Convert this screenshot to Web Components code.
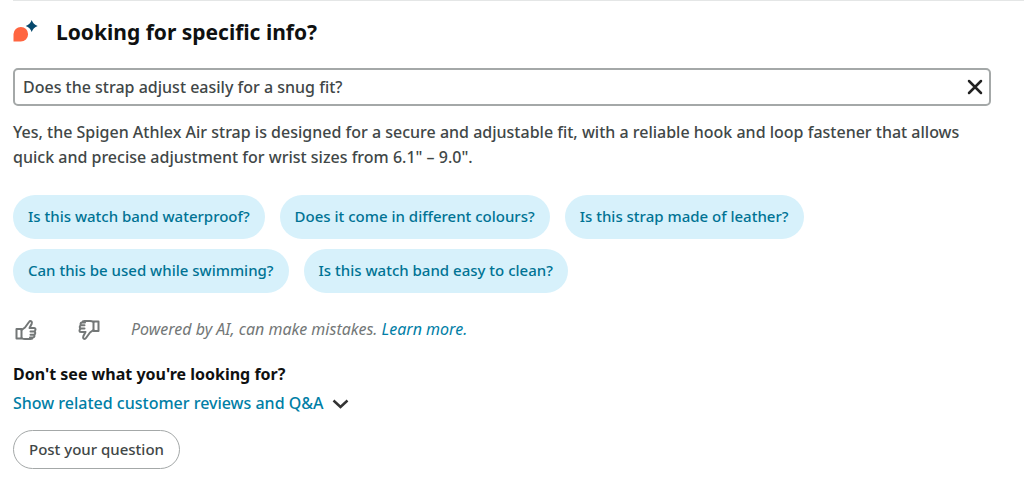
<!DOCTYPE html>
<html lang="en">
<head>
<meta charset="utf-8">
<meta name="viewport" content="width=device-width, initial-scale=1">
<title>Looking for specific info?</title>
<style>
    :root {
        --text: #414747;
        --heading: #0f1111;
        --link: #007ea6;
        --chip: #d7f1fb;
        --chip-text: #007394;
        --border: #a4a8a8;
        --muted: #737777;
    }
    body {
        margin: 0;
        background: #fff;
        color: var(--text);
        font: 500 16px/25px "Noto Sans", "Open Sans", sans-serif;
    }
</style>
</head>
<body>
<info-panel>
    <info-heading slot="heading">Looking for specific info?</info-heading>
    <question-box slot="question" value="Does the strap adjust easily for a snug fit?"></question-box>
    <span slot="answer">Yes, the Spigen Athlex Air strap is designed for a secure and adjustable fit, with a reliable hook and loop fastener that allows quick and precise adjustment for wrist sizes from 6.1" – 9.0".</span>
    <question-chip slot="chips">Is this watch band waterproof?</question-chip>
    <question-chip slot="chips">Does it come in different colours?</question-chip>
    <question-chip slot="chips">Is this strap made of leather?</question-chip>
    <question-chip slot="chips">Can this be used while swimming?</question-chip>
    <question-chip slot="chips">Is this watch band easy to clean?</question-chip>
    <answer-feedback slot="feedback">Powered by AI, can make mistakes.</answer-feedback>
    <more-help slot="more">Don't see what you're looking for?</more-help>
</info-panel>

<script>
class BaseElement extends HTMLElement {
    constructor() {
        super()
        this.attachShadow({ mode: 'open' })
        const template = document.createElement('template')
        template.innerHTML = this.markup
        this.shadowRoot.appendChild(template.content.cloneNode(true))
    }
}

class InfoPanel extends BaseElement {
    get markup() {
        return `
            <style>
            :host {
                display: block;
                margin-left: 13px;
            }
            section {
                border-top: 1px solid #e4e6e6;
                padding: 15px 33px 9px 0;
            }
            p {
                margin: 14px 0 25px;
            }
            .chips {
                display: flex;
                flex-wrap: wrap;
                gap: 10px 15px;
            }
            </style>
            <section>
                <slot name="heading"></slot>
                <slot name="question"></slot>
                <p><slot name="answer"></slot></p>
                <div class="chips"><slot name="chips"></slot></div>
                <slot name="feedback"></slot>
                <slot name="more"></slot>
            </section>
        `
    }
}

class InfoHeading extends BaseElement {
    get markup() {
        return `
            <style>
            :host {
                display: flex;
                gap: 18px;
                margin-bottom: 20px;
                color: var(--heading);
            }
            svg {
                flex: none;
            }
            h2 {
                margin: 0;
                font-size: 21px;
                line-height: 32px;
            }
            </style>
            <svg width="25" height="32" viewBox="0 0 25 32" aria-hidden="true">
                <path fill="#ff6540" d="M0.500 25.500V18A7.300 7.300 0 1 1 7.800 25.500Z"/>
                <path fill="#06496d" d="M18.700 4Q20.200 8.500 24.700 10Q20.200 11.500 18.700 16Q17.200 11.500 12.700 10Q17.200 8.500 18.700 4Z"/>
            </svg>
            <h2><slot></slot></h2>
        `
    }
}

class QuestionBox extends BaseElement {
    get markup() {
        return `
            <style>
            :host {
                display: block;
            }
            .box {
                display: flex;
                align-items: center;
                border: 2px solid var(--border);
                border-radius: 5px;
            }
            input {
                flex: 1;
                min-width: 0;
                height: 34px;
                box-sizing: border-box;
                padding: 0 8px;
                border: 0;
                outline: 0;
                background: none;
                color: inherit;
                font: inherit;
            }
            button {
                display: flex;
                padding: 6px;
                border: 0;
                background: none;
                cursor: pointer;
            }
            </style>
            <div class="box">
                <input type="text" aria-label="Your question">
                <button type="button" aria-label="Clear">
                    <svg width="16" height="16" viewBox="0 0 16 16" fill="none" stroke="#222" stroke-width="2.500" stroke-linecap="round">
                        <path d="M2 2L14 14M14 2L2 14"/>
                    </svg>
                </button>
            </div>
        `
    }

    connectedCallback() {
        const input = this.shadowRoot.querySelector("input")
        input.value = this.getAttribute("value") || ""
        this.shadowRoot.querySelector("button").onclick = () => {
            input.value = ""
            input.focus()
        }
    }
}

class QuestionChip extends BaseElement {
    get markup() {
        return `
            <style>
            :host {
                display: block;
            }
            button {
                display: block;
                height: 44px;
                padding: 0 15px 2px;
                border: 0;
                border-radius: 22px;
                background: var(--chip);
                color: var(--chip-text);
                font: inherit;
                font-size: 15px;
                cursor: pointer;
            }
            </style>
            <button type="button"><slot></slot></button>
        `
    }
}

class AnswerFeedback extends BaseElement {
    get markup() {
        const thumb = `
            <path d="M1.500 10H6.500V19.500H1.500Z"/>
            <path d="M6.500 11L10 8.500L14 3Q15 1.500 16.300 2.300Q17.300 3.200 16.700 4.700L14.500 9H19Q20.500 9 20.500 10.500T19 12.500H15.500M19 12.500Q20.300 12.700 20.300 14T18.800 15.700H15.500M18.800 15.700Q19.700 16 19.500 17.200T18 18.500H15M18 18.500Q17.500 20 15.500 20H10Q8 20 6.500 19"/>
        `
        return `
            <style>
            :host {
                display: flex;
                align-items: center;
                margin-top: 24px;
                padding-left: 2px;
                color: var(--muted);
                font-weight: 400;
            }
            button {
                display: flex;
                margin-right: 41px;
                padding: 0;
                border: 0;
                background: none;
                color: inherit;
                cursor: pointer;
            }
            button + button {
                margin-right: 31px;
            }
            svg {
                fill: none;
                stroke: currentColor;
                stroke-width: 2;
                stroke-linejoin: round;
                stroke-linecap: round;
            }
            a {
                color: var(--link);
                text-decoration: none;
            }
            </style>
            <button type="button" aria-label="Helpful">
                <svg width="22" height="22" viewBox="0 0 22 22">${thumb}</svg>
            </button>
            <button type="button" aria-label="Not helpful">
                <svg width="22" height="22" viewBox="0 0 22 22"><g transform="rotate(180 11 11)">${thumb}</g></svg>
            </button>
            <em><slot></slot> <a href="#">Learn more.</a></em>
        `
    }
}

class MoreHelp extends BaseElement {
    get markup() {
        return `
            <style>
            :host {
                display: block;
                margin-top: 20px;
            }
            h3 {
                margin: 0 0 4px;
                color: var(--heading);
                font-size: 16px;
                line-height: 25px;
            }
            a {
                display: inline-flex;
                align-items: center;
                gap: 8px;
                color: var(--link);
                text-decoration: none;
            }
            button {
                display: block;
                height: 39px;
                margin-top: 14px;
                padding: 0 15px;
                border: 1px solid var(--border);
                border-radius: 20px;
                background: #fff;
                color: inherit;
                font: inherit;
                font-size: 15px;
                cursor: pointer;
            }
            </style>
            <h3><slot></slot></h3>
            <a href="#">Show related customer reviews and Q&amp;A
                <svg width="17" height="10" viewBox="0 0 17 10" fill="none" stroke="#333" stroke-width="2.500" aria-hidden="true">
                    <path d="M1.500 1.500L8.500 8L15.500 1.500"/>
                </svg>
            </a>
            <button type="button">Post your question</button>
        `
    }
}

customElements.define('info-panel', InfoPanel)
customElements.define('info-heading', InfoHeading)
customElements.define('question-box', QuestionBox)
customElements.define('question-chip', QuestionChip)
customElements.define('answer-feedback', AnswerFeedback)
customElements.define('more-help', MoreHelp)
</script>
</body>
</html>
